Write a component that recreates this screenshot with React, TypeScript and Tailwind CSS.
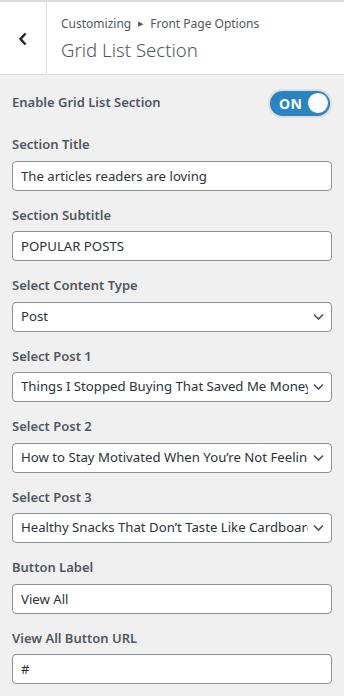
import React from "react";

const font = { fontFamily: '"Noto Sans", "Open Sans", sans-serif' };

const Chevron = () => (
  <svg
    className="pointer-events-none absolute right-[8px] top-1/2 -translate-y-1/2"
    width="11"
    height="7"
    viewBox="0 0 11 7"
    fill="none"
  >
    <path d="M1 1l4.5 4.5L10 1" stroke="#50575e" strokeWidth="1.7" />
  </svg>
);

const Label = ({ children }: { children: React.ReactNode }) => (
  <label className="mb-1 block text-[13px] font-semibold leading-[24.5px] text-[#50575e]">
    {children}
  </label>
);

const TextField = ({ label, value }: { label: string; value: string }) => (
  <div className="mb-3">
    <Label>{label}</Label>
    <input
      readOnly
      value={value}
      className="h-[30px] w-full rounded-[4px] border border-[#8c8f94] bg-white px-2 text-[13.2px] text-[#2c3338] outline-none"
      style={font}
    />
  </div>
);

const SelectField = ({ label, value }: { label: string; value: string }) => (
  <div className="mb-3">
    <Label>{label}</Label>
    <div className="relative">
      <div className="flex h-[30px] w-full items-center overflow-hidden whitespace-nowrap rounded-[4px] border border-[#8c8f94] bg-white pl-2 pr-[23px] text-[13.2px] text-[#2c3338]">
        <span className="block overflow-hidden">{value}</span>
      </div>
      <Chevron />
    </div>
  </div>
);

export default function App() {
  return (
    <div className="min-h-[696px] w-[344px] bg-[#f0f0f1]" style={font}>
      {/* header */}
      <div className="flex border-t-2 border-b border-[#dcdcde] bg-white">
        <div className="flex w-[47px] shrink-0 items-center justify-center border-r border-[#dcdcde]">
          <svg width="10" height="14" viewBox="0 0 10 14" fill="none" className="ml-[-1px] mt-[1px]">
            <path d="M7.5 1.5L2.5 7l5 5.5" stroke="#1d2327" strokeWidth="2.4" />
          </svg>
        </div>
        <div className="pl-[14px] pt-[13px] pb-[10px]">
          <div className="flex items-center text-[12px] leading-[18px] text-[#50575e]">
            Customizing
            <span className="mx-[7px] text-[7px]">▶</span>
            Front Page Options
          </div>
          <div className="mt-[3px] text-[18.6px] font-light leading-[28px] text-[#50575e]">
            Grid List Section
          </div>
        </div>
      </div>

      {/* controls */}
      <div className="px-3 pt-[13px]">
        <div className="mb-[14px] flex h-[30px] items-center justify-between">
          <span className="text-[13px] font-semibold text-[#50575e]">Enable Grid List Section</span>
          <div className="mr-[2px] flex h-[25px] w-[60px] items-center justify-between rounded-full bg-[#2a84c0] pl-[9px] pr-[1px] shadow-[0_0_0_2px_#dedede]">
            <span className="text-[14px] font-bold tracking-[0.5px] text-white">ON</span>
            <span className="h-[22px] w-[22px] rounded-full border border-[#2a84c0] bg-white" />
          </div>
        </div>

        <TextField label="Section Title" value="The articles readers are loving" />
        <TextField label="Section Subtitle" value="POPULAR POSTS" />
        <SelectField label="Select Content Type" value="Post" />
        <SelectField label="Select Post 1" value="Things I Stopped Buying That Saved Me Money" />
        <SelectField label="Select Post 2" value="How to Stay Motivated When You’re Not Feeling It" />
        <SelectField label="Select Post 3" value="Healthy Snacks That Don’t Taste Like Cardboard" />
        <TextField label="Button Label" value="View All" />
        <TextField label="View All Button URL" value="#" />
      </div>
    </div>
  );
}
